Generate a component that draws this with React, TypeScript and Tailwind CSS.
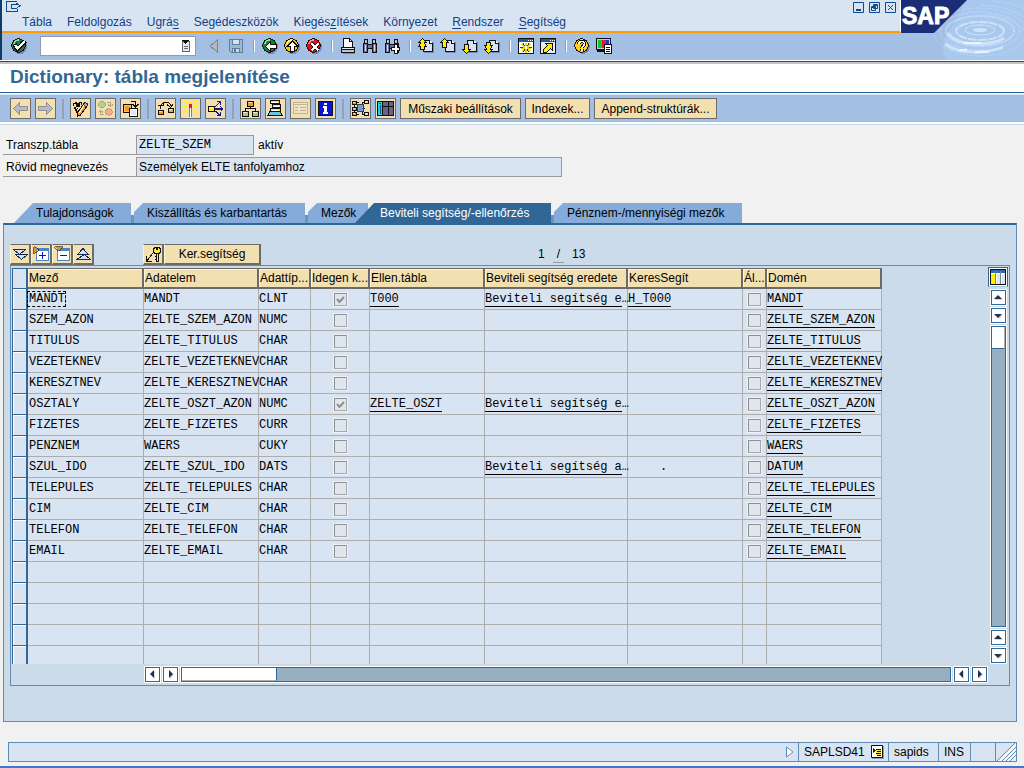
import type { ReactNode } from "react";
import clsx from "clsx";

const MENUS = [
    { before: "", key: "", after: "Tábla" },
    { before: "", key: "", after: "Feldolgozás" },
    { before: "Ugrá", key: "s", after: "" },
    { before: "Segédeszközök", key: "", after: "" },
    { before: "Kiegés", key: "z", after: "ítések" },
    { before: "Környezet", key: "", after: "" },
    { before: "", key: "R", after: "endszer" },
    { before: "", key: "S", after: "egítség" },
];

type Row = {
    field: string;
    element: string;
    type: string;
    foreign?: boolean;
    check?: string;
    origin?: string;
    help?: string;
    note?: string;
    domain: string;
};

const ROWS: Row[] = [
    { field: "MANDT", element: "MANDT", type: "CLNT", foreign: true, check: "T000", origin: "Beviteli segítség e", help: "H_T000", domain: "MANDT" },
    { field: "SZEM_AZON", element: "ZELTE_SZEM_AZON", type: "NUMC", domain: "ZELTE_SZEM_AZON" },
    { field: "TITULUS", element: "ZELTE_TITULUS", type: "CHAR", domain: "ZELTE_TITULUS" },
    { field: "VEZETEKNEV", element: "ZELTE_VEZETEKNEV", type: "CHAR", domain: "ZELTE_VEZETEKNEV" },
    { field: "KERESZTNEV", element: "ZELTE_KERESZTNEV", type: "CHAR", domain: "ZELTE_KERESZTNEV" },
    { field: "OSZTALY", element: "ZELTE_OSZT_AZON", type: "NUMC", foreign: true, check: "ZELTE_OSZT", origin: "Beviteli segítség e", domain: "ZELTE_OSZT_AZON" },
    { field: "FIZETES", element: "ZELTE_FIZETES", type: "CURR", domain: "ZELTE_FIZETES" },
    { field: "PENZNEM", element: "WAERS", type: "CUKY", domain: "WAERS" },
    { field: "SZUL_IDO", element: "ZELTE_SZUL_IDO", type: "DATS", origin: "Beviteli segítség a", note: ".", domain: "DATUM" },
    { field: "TELEPULES", element: "ZELTE_TELEPULES", type: "CHAR", domain: "ZELTE_TELEPULES" },
    { field: "CIM", element: "ZELTE_CIM", type: "CHAR", domain: "ZELTE_CIM" },
    { field: "TELEFON", element: "ZELTE_TELEFON", type: "CHAR", domain: "ZELTE_TELEFON" },
    { field: "EMAIL", element: "ZELTE_EMAIL", type: "CHAR", domain: "ZELTE_EMAIL" },
];

const HEADERS = ["Mező", "Adatelem", "Adattíp...", "Idegen k...", "Ellen.tábla", "Beviteli segítség eredete", "KeresSegít", "Ál...", "Domén"];

const MONO = "font-['Liberation_Mono',monospace]";

const Icon = ({ size = 16, children }: { size?: number; children: ReactNode }) => (
    <svg width={size} height={size} viewBox={`0 0 ${size} ${size}`} fill="none" shapeRendering="crispEdges" className="block shrink-0" aria-hidden="true">
        {children}
    </svg>
);

/* ---------- standard toolbar icons ---------- */

const Ball = ({ fill, shine, children }: { fill: string; shine: string; children: ReactNode }) => (
    <Icon>
        <circle cx="9" cy="9" r="7" fill="#7f86b8" />
        <circle cx="7.5" cy="7.5" r="6.8" fill={fill} stroke="#111" strokeWidth="1" />
        <path d="M3 6a5 5 0 0 1 5-4" stroke={shine} strokeWidth="1.5" />
        {children}
    </Icon>
);

const OkIcon = () => (
    <Ball fill="#17803a" shine="#9fe0a0">
        <path d="M3.5 6.500l3 4.500L14 3" stroke="#111" strokeWidth="4.5" />
        <path d="M4 7l2.700 3.500L13.500 3.500" stroke="#fff" strokeWidth="2.4" />
    </Ball>
);

const BackIcon = () => (
    <Ball fill="#17803a" shine="#9fe0a0">
        <path d="M3.500 8.500l5-5v3h6v4h-6v3z" fill="#fff" stroke="#111" strokeWidth="1" />
    </Ball>
);

const UpIcon = () => (
    <Ball fill="#ffc800" shine="#fff6b0">
        <path d="M8.500 3l5 5h-3v5.500h-4V8h-3z" fill="#fff" stroke="#111" strokeWidth="1" />
    </Ball>
);

const CancelIcon = () => (
    <Ball fill="#e0101c" shine="#ff9a9a">
        <path d="M5.500 5.500l7 7M12.500 5.500l-7 7" stroke="#111" strokeWidth="4" />
        <path d="M5.500 5.500l7 7M12.500 5.500l-7 7" stroke="#fff" strokeWidth="2" />
    </Ball>
);

const SaveIcon = () => (
    <Icon>
        <path d="M1.500 1.500h13v13h-11l-2-2z" fill="#9db9cf" stroke="#5f7f9c" />
        <path d="M4.500 1.500h7v5h-7z" fill="#d5e3ef" stroke="#5f7f9c" />
        <path d="M4.500 14v-4h7v4" fill="#c5d6e4" stroke="#5f7f9c" />
        <path d="M6 11h2v3H6z" fill="#5f7f9c" />
    </Icon>
);

const PrintIcon = () => (
    <Icon>
        <path d="M3 12h12v4H3z" fill="#7f86b8" />
        <path d="M3.500 9.500v-9h6l3 3v6" fill="#fff" stroke="#111" />
        <path d="M9.500.500v3h3" stroke="#111" />
        <path d="M1.500 9.500h13v2h-13z" fill="#e8e8f0" stroke="#111" />
        <path d="M1.500 11.500h13v2.500h-13z" fill="#bfc3d6" stroke="#111" />
    </Icon>
);

const Glasses = () => (
    <>
        <path d="M1.500 5.500h4v9h-4zM10.500 5.500h4v9h-4z" fill="#74749c" stroke="#111" />
        <path d="M2.500 1.500h3v4h-3zM10.500 1.500h3v4h-3z" fill="#b9bad2" stroke="#111" />
        <path d="M5.500 6.500h5v4h-5z" fill="#74749c" stroke="#111" />
        <path d="M3.500 7v6M12.500 7v6" stroke="#dcdcea" />
    </>
);

const FindIcon = () => <Icon><Glasses /></Icon>;

const FindNextIcon = () => (
    <Icon>
        <Glasses />
        <path d="M10.500 6.500h3v3h2v3h-2v3h-3v-3h-3v-3h3z" fill="#fff" stroke="#111" />
    </Icon>
);

const PageIcon = ({ arrow }: { arrow: string }) => (
    <Icon>
        <path d="M6 4h10v11H6z" fill="#7f86b8" />
        <path d="M5.500 2.500h6l3 3v8h-9z" fill="#d7e2f2" stroke="#111" />
        <path d="M11.500 2.500v3h3" fill="#fff" stroke="#111" />
        <path d={arrow} fill="#ffee00" stroke="#111" />
    </Icon>
);

const WindowStarIcon = () => (
    <Icon>
        <path d="M.5.500h15v15H.5z" fill="#fff" stroke="#111" />
        <path d="M1 1h14v3H1z" fill="#1464a0" />
        <path d="M12 2.500h1M14 2.500h1M10 2.500h1" stroke="#fff" />
        <path d="M8 5v10M3 9.500h10" stroke="#e8d800" strokeWidth="2" />
        <path d="M4 6l8 8M12 6l-8 8" stroke="#e8d800" strokeWidth="1.500" />
        <path d="M5 5l2 3M11 5l-2 3M5 14l2-3M11 14l-2-3M2 9h3M11 9h3" stroke="#111" strokeWidth=".8" />
        <path d="M7 8h2v3H7z" fill="#fff" />
    </Icon>
);

const ShortcutIcon = () => (
    <Icon>
        <path d="M.5.500h15v15H.5z" fill="#e8ecf2" stroke="#111" />
        <path d="M1 1h14v3H1z" fill="#1464a0" />
        <path d="M10 2.500h1M12 2.500h1M14 2.500h1" stroke="#fff" />
        <path d="M3.500 14.500v-3l4-4-2-2h7v7l-2-2-4 4z" fill="#ffee00" stroke="#111" />
    </Icon>
);

const HelpIcon = () => (
    <Icon>
        <circle cx="9" cy="9" r="6.800" fill="#7f86b8" />
        <circle cx="7.500" cy="7.500" r="6.800" fill="#ffd21e" stroke="#111" />
        <path d="M5 6c0-3.500 5.500-3.500 5.500 0C10.500 8 8 7.800 8 10M8 11.200v2" stroke="#111" strokeWidth="3.600" />
        <path d="M5 6c0-3.500 5.500-3.500 5.500 0C10.500 8 8 7.800 8 9.800M8 11.300v1.700" stroke="#fff" strokeWidth="1.600" />
    </Icon>
);

const LayoutIcon = () => (
    <Icon>
        <path d="M.5.500h14v11H.5z" fill="#c9ccd4" stroke="#111" />
        <path d="M2 2h4v8H2z" fill="#12c832" />
        <path d="M6 2h4v8H6z" fill="#f01428" />
        <path d="M10 2h3v8h-3z" fill="#1432f0" />
        <path d="M1 13h8" stroke="#111" strokeWidth="2" />
        <path d="M8.500 6.500h7v9h-7z" fill="#fff" stroke="#111" />
        <path d="M10 9.500h4M10 11.500h4M10 13.500h4" stroke="#111" />
    </Icon>
);

/* ---------- application toolbar icons ---------- */

const ArrowIcon = ({ d }: { d: string }) => (
    <Icon size={17}>
        <path d={d} fill="#b9b9c6" stroke="#938f94" />
    </Icon>
);

const Box = ({ x, y, w = 5, fill }: { x: number; y: number; w?: number; fill: string }) => (
    <>
        <rect x={x + 0.5} y={y + 0.5} width={w} height={w - 1} fill={fill} stroke="#111" />
        <path d={`M${x + 1} ${y + 1.5}h${w - 2}`} stroke="#fff" strokeOpacity=".7" />
    </>
);

const PencilIcon = () => (
    <Icon size={17}>
        <path d="M1.500 6V3.500h2V2h1v4h1V3h1v3h1V2h2v3" stroke="#111" />
        <path d="M3 7l4 7" stroke="#111" strokeWidth="3" />
        <path d="M4 7l3 6" stroke="#ffe63c" />
        <path d="M5.500 13L12.500 2.500l3.500 2.500-7.500 10-3 1z" fill="#f49b2c" stroke="#111" />
        <path d="M12.500 2.500l3.500 2.500-1.500 2-3.500-2.500z" fill="#9db4ee" stroke="#111" strokeWidth=".7" />
        <path d="M7 13l5-7.500" stroke="#fff" />
    </Icon>
);

const ActivateIcon = () => (
    <Icon size={17}>
        <circle cx="5" cy="4.500" r="3.200" fill="#b3d191" stroke="#8fb37a" />
        <circle cx="12" cy="12" r="3.200" fill="#efb08a" stroke="#d79873" />
        <path d="M10 2.500h3.500V6M11 4.500l2.500 2L16 4.500M7 14.500H3.500V11M1.500 12.500l2-2 2.500 2" stroke="#b1a588" />
    </Icon>
);

const CopyIcon = () => (
    <Icon size={17}>
        <path d="M1 4h9v9H1z" fill="#111" />
        <path d="M2.500 5.500h6v6h-6z" fill="#f79a1e" stroke="#ffc45c" />
        <path d="M7 8h9v9H7z" fill="#111" />
        <path d="M8.500 9.500h6v6h-6z" fill="#dce8f6" stroke="#fff" />
        <path d="M9 1.500h4.500V6M10.500 4l3 3 3-3" stroke="#111" />
    </Icon>
);

const WhereUsedIcon = () => (
    <Icon size={17}>
        <Box x={1} y={10} fill="#f79a1e" />
        <Box x={11} y={8} fill="#b3c56c" />
        <path d="M3.500 9V5.500l3-3h5l2 2V6M1 5.500h5V3M10 4.500l3.500 3 2.500-3" stroke="#111" />
    </Icon>
);

const WandIcon = () => (
    <Icon size={17}>
        <path d="M8.500 4V1M5 6.500H1M12 6.500h4M6 4L2 0M11 4l4-4M6 9l-4 4M11 9l4 4M4 2l2 2M13 2l-2 2" stroke="#fff000" />
        <path d="M7 7h3v10H7z" fill="#7d7da5" />
        <path d="M8.500 8v9" stroke="#fff" />
        <path d="M7 4h3v4H7z" fill="#f01428" />
    </Icon>
);

const SpreadIcon = () => (
    <Icon size={17}>
        <Box x={1} y={6} w={6} fill="#ffe63c" />
        <path d="M8 7l5-5M8 9h8M8 11l5 4M10 1.500h3.500V5M13.500 6.500L16 9l-2.500 2.500M10 15.500h3.500V12" stroke="#1a1a8c" strokeWidth="1.200" />
    </Icon>
);

const HierarchyIcon = () => (
    <Icon size={17}>
        <path d="M8.500 6v3M3.500 11V8.500h10V11" stroke="#111" />
        <Box x={5} y={1} w={6} fill="#f79a1e" />
        <Box x={0} y={11} w={6} fill="#b3c56c" />
        <Box x={10} y={11} w={6} fill="#b3c56c" />
    </Icon>
);

const StackIcon = () => (
    <Icon size={17}>
        <path d="M3.500.500h9v3h-9zM5.500 4.500h8v3h-8zM3.500 8.500h10v3h-10z" fill="#ffe63c" stroke="#111" />
        <path d="M5 2h6M7 6h5M5 10h6" stroke="#fff" />
        <path d="M3 11.500L.500 15.500h15L13 11.500" fill="#6cc4e0" stroke="#111" />
    </Icon>
);

const ListIcon = () => (
    <Icon size={17}>
        <path d="M1.500 2.500h14v11h-14z" fill="#eee3c5" stroke="#c1b595" />
        <path d="M2 4.500h13M3 7.500h3M8 7.500h6M3 10.500h3M8 10.500h6" stroke="#c1b595" />
    </Icon>
);

const InfoIcon = () => (
    <Icon size={17}>
        <path d="M1.500 1.500h14v14h-14z" fill="#0a14d2" stroke="#111" />
        <path d="M7 3h3v2H7zM6 6h4v6h1v2H6v-2h1V8H6z" fill="#fff" />
    </Icon>
);

const LinkedIcon = () => (
    <Icon size={17}>
        <path d="M2.500 4v10M4 8.500h9M4 2.500h3M4 14.500h3M10 4.500V2.500h3M10 12v2.500h3" stroke="#111" />
        <rect x="5.500" y="4.500" width="6" height="7" fill="#7b9cd0" stroke="#345" />
        <Box x={0} y={1} w={4} fill="#f79a1e" />
        <Box x={0} y={7} w={4} fill="#f79a1e" />
        <Box x={0} y={12} w={4} fill="#f79a1e" />
        <Box x={12} y={0} w={4} fill="#d7deb8" />
        <Box x={12} y={12} w={4} fill="#d7deb8" />
    </Icon>
);

const GridIcon = () => (
    <Icon size={17}>
        <path d="M.500 1.500h16v14H.500z" fill="#66638c" stroke="#111" />
        <path d="M1 2h4v13H1z" fill="#19d2ee" />
        <path d="M5.500 2v13M11.500 2v13M5 6.500h11" stroke="#111" />
        <path d="M2 3.500h2M3.500 5v9" stroke="#0a5a96" />
    </Icon>
);

/* ---------- table toolbar icons ---------- */

const DoubleDownIcon = () => (
    <Icon size={17}>
        <path d="M3.500 8.500h12l-6 5z" fill="#cfe0f4" stroke="#1c2a4a" />
        <path d="M1.500 3.500h12l-6 5z" fill="#cfe0f4" stroke="#1c2a4a" />
    </Icon>
);

const DoubleUpIcon = () => (
    <Icon size={17}>
        <path d="M2.500 8.500h11l-5.500-6z" fill="#cfe0f4" stroke="#1c2a4a" />
        <path d="M1.500 13.500h14l-6-5z" fill="#cfe0f4" stroke="#1c2a4a" />
    </Icon>
);

const FolderIcon = ({ plus }: { plus?: boolean }) => (
    <Icon size={17}>
        <path d="M3.500 2.500h12v12h-12z" fill="#fff" stroke="#4c86c4" />
        <path d="M4 4h11" stroke="#4c86c4" strokeWidth="2" />
        <path d={plus ? "M6 9.500h7M9.500 6v7" : "M6 9.500h7"} stroke="#0a14b4" />
        <path d={plus ? "M.500.500v7l5-3.500z" : "M.500.500h8l-4 4z"} fill="#f78a14" stroke="#111" strokeWidth=".6" />
    </Icon>
);

const KeyIcon = () => (
    <Icon size={17}>
        <circle cx="12" cy="4.500" r="3.500" fill="#ffe63c" stroke="#111" />
        <path d="M11 2h2v2h-2z" fill="#111" />
        <path d="M11.500 8v7.500h2V8M9.500 10.500h2M9.500 13.500h2" fill="#ffe63c" stroke="#111" />
        <path d="M8 7l-6 8M1.500 10v5.500H7" stroke="#111" />
    </Icon>
);

const ColumnsIcon = () => (
    <Icon>
        <path d="M.5.500h15v15H.5z" fill="#fff" stroke="#111" />
        <path d="M1 1h14v3H1z" fill="#2a6ab4" />
        <path d="M1 5h4v10H1z" fill="#ffee00" />
        <path d="M7 5h3v10H7zM12 5h3v10h-3z" fill="#dce4ee" />
        <path d="M5.500 2v13M10.500 2v13" stroke="#78849a" />
    </Icon>
);

/* ---------- parts ---------- */

const Brand = () => (
    <svg width="123" height="60" viewBox="0 0 123 60" className="block shrink-0 bg-[#a3bfe3]" role="img" aria-label="SAP">
        <path d="M66 0h57v60H45q-8-14 4-30z" fill="#a9c8ee" />
        <g fill="none" stroke="#cfe3f8">
            <ellipse cx="79" cy="30" rx="6" ry="1" strokeWidth="2" />
            <ellipse cx="79" cy="30" rx="15" ry="5" strokeWidth="1" />
            <ellipse cx="79" cy="31" rx="24" ry="9" strokeWidth="2" strokeDasharray="9 1" />
            <ellipse cx="79" cy="31" rx="34" ry="15" strokeDasharray="1 1" strokeWidth="2" />
            <ellipse cx="79" cy="31" rx="40" ry="19" strokeDasharray="1 1" />
            <ellipse cx="79" cy="32" rx="46" ry="24" strokeDasharray="1 2" />
            <path d="M47 33q6 10 28 11 20 0 28-6" strokeWidth="3" />
            <path d="M44 44q12 9 34 8 16-1 24-5" strokeWidth="3" />
            <path d="M62 43h18M58 50h8M74 52h14" stroke="#e9f4ff" strokeWidth="2" />
            <path d="M86 14q24 3 37 16M80 5q28 1 43 13M92 1q20 2 31 8" strokeDasharray="1 1" />
        </g>
        <path d="M0 0h66L33 33H0z" fill="#1c2d78" />
        <text x="1" y="24" fill="#fff" stroke="#fff" strokeWidth="1" fontFamily="Liberation Sans, sans-serif" fontWeight="700" fontSize="23">
            SAP
        </text>
    </svg>
);

const IconButton = ({ label, children }: { label: string; children: ReactNode }) => (
    <button type="button" aria-label={label} className="shrink-0">
        {children}
    </button>
);

const Sep = () => <span className="mr-[7px] ml-[9px] h-3 w-[2px] shrink-0 border-r border-white bg-[#9a9aa4]" />;

const ToolButton = ({ label, children }: { label: string; children: ReactNode }) => (
    <button
        type="button"
        aria-label={label}
        className="flex size-[21px] shrink-0 items-center justify-center border border-[#6b6b6b] bg-[#f3e0b0]"
    >
        {children}
    </button>
);

const TextButton = ({ className, children }: { className: string; children: ReactNode }) => (
    <button type="button" className={clsx("h-[21px] shrink-0 border border-[#6b6b6b] bg-[#f3e0b0] whitespace-nowrap", className)}>
        {children}
    </button>
);

const ToolSep = () => <span className="mx-[2px] h-5 w-[2px] shrink-0 bg-[#98a0b0]" />;

const TableButton = ({ label, children }: { label: string; children: ReactNode }) => (
    <button
        type="button"
        aria-label={label}
        className="flex size-[21px] shrink-0 items-center justify-center border-t border-r-2 border-b-2 border-l border-[#6b6b6b] border-l-[#fdf3d2] bg-[#f3e0b0]"
    >
        {children}
    </button>
);

const Tab = ({ className, active, children }: { className: string; active?: boolean; children: ReactNode }) => (
    <button
        type="button"
        role="tab"
        aria-selected={!!active}
        className={clsx("h-5 shrink-0 text-left whitespace-nowrap", active ? "bg-[#306796] text-white" : "bg-[#84abd9]", className)}
    >
        {children}
    </button>
);

const TabGap = () => <span className="h-2 w-[3px] shrink-0 bg-[#6b93bd]" />;

const ScrollButton = ({ label, d }: { label: string; d: string }) => (
    <button
        type="button"
        aria-label={label}
        className="flex size-[15px] shrink-0 items-center justify-center border border-[#306796] bg-white outline outline-white"
    >
        <svg width="9" height="9" viewBox="0 0 9 9" aria-hidden="true">
            <path d={d} transform="translate(1 1)" fill="#cdd8e8" />
            <path d={d} fill="#26304e" />
        </svg>
    </button>
);

const UP = "M0 6h8L4 2z";
const DOWN = "M0 3h8L4 7z";
const LEFT = "M6 0v8L2 4z";
const RIGHT = "M3 0v8l4-4z";

const Check = ({ checked, label }: { checked?: boolean; label: string }) => (
    <span className="relative mx-auto block size-[13px]">
        <input
            type="checkbox"
            disabled
            checked={!!checked}
            readOnly
            aria-label={label}
            className="block size-[13px] appearance-none border border-t-[#8f8f8f] border-r-[#a8a8a8] border-b-[#a8a8a8] border-l-[#8f8f8f] bg-[#dfe6ee] outline outline-[#eef2f6]"
        />
        {checked && (
            <svg width="13" height="13" viewBox="0 0 13 13" className="absolute inset-0" aria-hidden="true">
                <path d="M3 6l2.500 3L10 4" fill="none" stroke="#8f8f8f" strokeWidth="2" />
            </svg>
        )}
    </span>
);

const Cell = ({ children }: { children?: ReactNode }) => (
    <td className="border-r border-b border-[#adadad] bg-[#d9e4f2] p-0 whitespace-nowrap">{children}</td>
);

const CellLink = ({ children }: { children: ReactNode }) => (
    <a href="#" className="inline-block h-4 border-b border-black leading-4">
        {children}
    </a>
);

const FieldTable = () => (
    <table className={clsx("w-[870px] table-fixed border-separate border-spacing-0 text-xs", MONO)}>
        <colgroup>
            <col className="w-[16px]" />
            <col className="w-[116px]" />
            <col className="w-[115px]" />
            <col className="w-[52px]" />
            <col className="w-[59px]" />
            <col className="w-[115px]" />
            <col className="w-[143px]" />
            <col className="w-[115px]" />
            <col className="w-[24px]" />
            <col className="w-[115px]" />
        </colgroup>
        <thead>
            <tr className="h-[21px] font-['Liberation_Sans',Arial,sans-serif] text-[12px]">
                <td className="border border-r-2 border-[#306796] bg-[#d9e4f2] p-0" />
                {HEADERS.map((name) => (
                    <th
                        key={name}
                        scope="col"
                        className="border-t border-r-2 border-b-2 border-[#6b6b6b] bg-[#f3e0b0] p-0 pl-px text-left leading-4 font-normal whitespace-nowrap shadow-[inset_1px_1px_0_#fdf6da]"
                    >
                        {name}
                    </th>
                ))}
            </tr>
        </thead>
        <tbody>
            {ROWS.map((row, i) => (
                <tr key={row.field} className="h-[21px]">
                    <td className="border-r-2 border-b border-l border-[#306796] bg-[#d9e4f2] p-0 shadow-[inset_1px_1px_0_white]" />
                    <Cell>
                        <span className={clsx("pl-px", i === 0 && "outline outline-dashed outline-black")}>{row.field}</span>
                    </Cell>
                    <Cell>{row.element}</Cell>
                    <Cell>{row.type}</Cell>
                    <Cell><Check checked={row.foreign} label={`Idegen kulcs ${row.field}`} /></Cell>
                    <Cell>{row.check && <CellLink>{row.check}</CellLink>}</Cell>
                    <Cell>{row.origin && <><CellLink>{row.origin}</CellLink>…</>}</Cell>
                    <Cell>
                        {row.help && <CellLink>{row.help}</CellLink>}
                        {row.note && <span className="pl-8">{row.note}</span>}
                    </Cell>
                    <Cell><Check label={`Általános ${row.field}`} /></Cell>
                    <Cell><CellLink>{row.domain}</CellLink></Cell>
                </tr>
            ))}
            {[0, 1, 2, 3, 4].map((n) => (
                <tr key={n} className={n === 4 ? "h-[18px]" : "h-[21px]"}>
                    <td className={clsx("border-r-2 border-l border-[#306796] bg-[#d9e4f2] p-0 shadow-[inset_1px_1px_0_white]", n < 4 && "border-b")} />
                    {HEADERS.map((name) => (
                        <td key={name} className={clsx("border-r border-[#adadad] bg-[#d9e4f2] p-0", n < 4 && "border-b")} />
                    ))}
                </tr>
            ))}
        </tbody>
    </table>
);

const App = () => {
    return (
        <div className="flex min-h-screen flex-col border-b-2 border-[#3c78d2] bg-[#f1f1f1] font-['Liberation_Sans',Arial,sans-serif] text-[12px] leading-4 text-black">
            <header className="flex border-b border-white bg-[#a3bfe3]">
                <span className="w-[2px] shrink-0 bg-[#0f3c64]" />
                <div className="min-w-0 flex-1">
                    <div className="flex h-[33px] justify-between border-r border-b-2 border-r-white border-b-[#ff9c00] bg-[#d9e4f2]">
                        <div>
                            <button type="button" aria-label="Rendszermenü" className="ml-1 block h-[14px]">
                                <svg width="15" height="14" viewBox="0 0 15 14" fill="none" stroke="#0f4a8c" shapeRendering="crispEdges" aria-hidden="true">
                                    <path d="M11 1.500H.500v10H11V9M4.500 4.500h6v-1l3.500 2-3.500 3H5v-4" />
                                </svg>
                            </button>
                            <nav className="flex gap-[15px] pl-[20px] text-[#0f3f86]">
                                {MENUS.map((m) => (
                                    <button key={m.before + m.key + m.after} type="button" className="whitespace-nowrap">
                                        {m.before}
                                        <span className="underline underline-offset-2">{m.key}</span>
                                        {m.after}
                                    </button>
                                ))}
                            </nav>
                        </div>
                        <div className="flex gap-[5px] pt-[2px] pr-1">
                            {[
                                { label: "Kis méret", d: "M3 8h5", w: 2 },
                                { label: "Előző méret", d: "M4.500 2.500h4v4h-4zM2.500 4.500h4v4h-4zM4 3.500h5M2 5.500h5", w: 1 },
                                { label: "Bezárás", d: "M3 3l5 5M8 3l-5 5", w: 1 },
                            ].map((b) => (
                                <button key={b.label} type="button" aria-label={b.label} className="h-[11px]">
                                    <svg width="11" height="11" viewBox="0 0 11 11" fill="none" stroke="#0f4a8c" aria-hidden="true">
                                        <path d="M.500.500h10v10H.500z" />
                                        <path d={b.d} strokeWidth={b.w} />
                                    </svg>
                                </button>
                            ))}
                        </div>
                    </div>
                    <div className="flex h-[27px] items-center pb-px pl-[9px]">
                        <IconButton label="Bevitel"><OkIcon /></IconButton>
                        <div className="ml-[13px] flex h-5 w-[156px] shrink-0 items-center border border-[#8d9cae] bg-white pr-1">
                            <input aria-label="Parancs" className="min-w-0 flex-1 px-1 outline-none" />
                            <IconButton label="Előzmények">
                                <svg width="10" height="12" viewBox="0 0 10 12" shapeRendering="crispEdges" aria-hidden="true">
                                    <path d="M1.500 1.500h7v10h-7z" fill="#e4e8ee" stroke="#667" />
                                    <path d="M3 6.500h4M3 8.500h4" stroke="#667" />
                                    <path d="M0 0h8L4 4z" fill="#111" />
                                </svg>
                            </IconButton>
                        </div>
                        <div className="ml-[10px] flex gap-[6px]">
                            <IconButton label="Vissza lépés">
                                <Icon><path d="M11.500 2v12L4 8z" fill="#b4b8c2" stroke="#7d828c" /></Icon>
                            </IconButton>
                            <IconButton label="Mentés"><SaveIcon /></IconButton>
                        </div>
                        <Sep />
                        <div className="flex gap-[6px]">
                            <IconButton label="Vissza"><BackIcon /></IconButton>
                            <IconButton label="Befejezés"><UpIcon /></IconButton>
                            <IconButton label="Mégse"><CancelIcon /></IconButton>
                        </div>
                        <Sep />
                        <div className="flex gap-[6px]">
                            <IconButton label="Nyomtatás"><PrintIcon /></IconButton>
                            <IconButton label="Keresés"><FindIcon /></IconButton>
                            <IconButton label="Tovább keresés"><FindNextIcon /></IconButton>
                        </div>
                        <Sep />
                        <div className="flex gap-[6px]">
                            <IconButton label="Első oldal"><PageIcon arrow="M4.500.500l4 4h-2v1l2 3h-2v3h-4v-3h-2l2-3v-1h-2z" /></IconButton>
                            <IconButton label="Előző oldal"><PageIcon arrow="M4.500.500l4 4h-2v5h-4v-5h-2z" /></IconButton>
                            <IconButton label="Következő oldal"><PageIcon arrow="M4.500 15.500l4-4h-2v-5h-4v5h-2z" /></IconButton>
                            <IconButton label="Utolsó oldal"><PageIcon arrow="M4.500 15.500l4-4h-2v-1l2-3h-2v-3h-4v3h-2l2 3v1h-2z" /></IconButton>
                        </div>
                        <Sep />
                        <div className="flex gap-[6px]">
                            <IconButton label="Új mód"><WindowStarIcon /></IconButton>
                            <IconButton label="Parancsikon"><ShortcutIcon /></IconButton>
                        </div>
                        <Sep />
                        <div className="flex gap-[6px]">
                            <IconButton label="Súgó"><HelpIcon /></IconButton>
                            <IconButton label="Elrendezés"><LayoutIcon /></IconButton>
                        </div>
                    </div>
                </div>
                <Brand />
            </header>

            <div className="border-t border-b border-t-[#44444c] border-b-[#1f5a94] bg-white">
                <h1 className="h-[30px] border-t-2 border-[#c4c4c8] pl-[10px] text-[19px] leading-[26px] font-bold text-[#306796]">
                    Dictionary: tábla megjelenítése
                </h1>
            </div>

            <div className="border-t border-b border-t-white border-b-[#c5d8ea]">
                <div className="flex h-[30px] items-center gap-1 border-t border-b-2 border-t-[#d9e4f2] border-b-white bg-[#a3bfe3] pl-[10px]">
                    <ToolButton label="Előző objektum"><ArrowIcon d="M1.500 8.500l6-6v4h8v4h-8v4z" /></ToolButton>
                    <ToolButton label="Következő objektum"><ArrowIcon d="M15.500 8.500l-6-6v4h-8v4h8v4z" /></ToolButton>
                    <ToolSep />
                    <ToolButton label="Megjelenítés/módosítás"><PencilIcon /></ToolButton>
                    <ToolButton label="Aktív/inaktív"><ActivateIcon /></ToolButton>
                    <ToolButton label="Másik objektum"><CopyIcon /></ToolButton>
                    <ToolSep />
                    <ToolButton label="Ellenőrzés"><WhereUsedIcon /></ToolButton>
                    <ToolButton label="Aktiválás"><WandIcon /></ToolButton>
                    <ToolButton label="Hol használt"><SpreadIcon /></ToolButton>
                    <ToolSep />
                    <ToolButton label="Objektumlista"><HierarchyIcon /></ToolButton>
                    <ToolButton label="Navigációs ablak"><StackIcon /></ToolButton>
                    <ToolButton label="Teljes kép"><ListIcon /></ToolButton>
                    <ToolButton label="Információ"><InfoIcon /></ToolButton>
                    <ToolSep />
                    <ToolButton label="Grafika"><LinkedIcon /></ToolButton>
                    <ToolButton label="Tartalom"><GridIcon /></ToolButton>
                    <TextButton className="w-[121px]">Műszaki beállítások</TextButton>
                    <TextButton className="w-[65px]">Indexek...</TextButton>
                    <TextButton className="w-[123px]">Append-struktúrák...</TextButton>
                </div>
            </div>

            <main className="flex flex-1 flex-col pr-[7px] pl-[3px]">
                <div className="mt-[10px] flex h-5">
                    <label htmlFor="table-name" className="w-[133px] border-b border-[#9a9a9a] pl-[3px] leading-5">Transzp.tábla</label>
                    <input id="table-name" readOnly value="ZELTE_SZEM" className={clsx("w-[118px] border border-[#9a9a9a] bg-[#d9e4f2] px-[2px] text-xs outline-none", MONO)} />
                    <span className="pl-1 leading-5">aktív</span>
                </div>
                <div className="mt-[2px] flex h-5">
                    <label htmlFor="short-text" className="w-[133px] border-b border-[#9a9a9a] pl-[3px] leading-5">Rövid megnevezés</label>
                    <input id="short-text" readOnly value="Személyek ELTE tanfolyamhoz" className="w-[426px] border border-[#9a9a9a] bg-[#d9e4f2] px-[2px] outline-none" />
                </div>

                <div role="tablist" className="mt-[26px] flex items-end pl-[11px]">
                    <Tab className="w-[117px] pl-[22px] [clip-path:polygon(19px_0,100%_0,100%_100%,0_100%)]">Tulajdonságok</Tab>
                    <TabGap />
                    <Tab className="w-[171px] pl-[13px] [clip-path:polygon(9px_0,100%_0,100%_100%,0_100%,0_9px)]">Kiszállítás és karbantartás</Tab>
                    <TabGap />
                    <Tab className="w-[60px] pl-[13px] [clip-path:polygon(9px_0,100%_0,100%_100%,0_100%,0_9px)]">Mezők</Tab>
                    <Tab active className="-ml-[13px] w-[196px] pl-[25px] [clip-path:polygon(19px_0,100%_0,100%_100%,0_100%)]">Beviteli segítség/-ellenőrzés</Tab>
                    <TabGap />
                    <Tab className="w-[188px] pl-[13px] [clip-path:polygon(9px_0,100%_0,100%_100%,0_100%,0_9px)]">Pénznem-/mennyiségi mezők</Tab>
                </div>

                <section className="border border-t-2 border-[#5f8bb5] border-t-[#306796] bg-[#ccdbea] px-[6px] pt-[19px] pb-[35px]">
                    <div className="flex h-[21px] items-center">
                        <TableButton label="Összes kibontása"><DoubleDownIcon /></TableButton>
                        <TableButton label="Kibontás"><FolderIcon plus /></TableButton>
                        <TableButton label="Összecsukás"><FolderIcon /></TableButton>
                        <TableButton label="Összes összecsukása"><DoubleUpIcon /></TableButton>
                        <span className="w-[49px] shrink-0" />
                        <TableButton label="Kulcs"><KeyIcon /></TableButton>
                        <button type="button" className="h-[21px] w-[97px] shrink-0 border-t border-r-2 border-b-2 border-l border-[#6b6b6b] border-l-[#fdf3d2] bg-[#f3e0b0] leading-4">
                            Ker.segítség
                        </button>
                        <div className="ml-[277px] flex gap-2">
                            <span>1</span>
                            <span className="border-b border-[#9a9a9a] px-1">/</span>
                            <span>13</span>
                        </div>
                    </div>

                    <div className="flex border border-[#5f8bb5] pt-[2px] pl-px">
                        <div className="min-w-0 flex-1">
                            <FieldTable />
                            <div className="mt-[3px] mb-[3px] ml-[133px] flex h-[15px] gap-[3px]">
                                <ScrollButton label="Balra" d={LEFT} />
                                <ScrollButton label="Jobbra" d={RIGHT} />
                                <div className="flex flex-1 border border-[#306796] bg-[#96b0c2] outline outline-white">
                                    <div className="w-[95px] border-r border-b border-r-[#306796] border-b-[#b0b0b0] bg-white" />
                                </div>
                                <ScrollButton label="Balra lap" d={LEFT} />
                                <ScrollButton label="Jobbra lap" d={RIGHT} />
                            </div>
                        </div>
                        <div className="flex w-[22px] shrink-0 flex-col items-center gap-[3px] pb-[22px]">
                            <button type="button" aria-label="Beállítások" className="-mt-px border border-[#306796] border-b-[#a9c8dc] bg-white p-px">
                                <ColumnsIcon />
                            </button>
                            <ScrollButton label="Fel" d={UP} />
                            <ScrollButton label="Le" d={DOWN} />
                            <div className="w-[15px] flex-1 border border-[#306796] bg-[#96b0c2] outline outline-white">
                                <div className="h-[22px] border-r border-b border-r-[#b0b0b0] border-b-[#306796] bg-white" />
                            </div>
                            <ScrollButton label="Lap fel" d={UP} />
                            <ScrollButton label="Lap le" d={DOWN} />
                        </div>
                    </div>
                </section>
            </main>

            <footer className="mt-5 mr-[7px] mb-1 ml-2 flex h-5 border border-[#5f8bb5] bg-[#d9e4f2] leading-[18px]">
                <div className="flex flex-1 items-center justify-end pr-1">
                    <svg width="8" height="12" viewBox="0 0 8 12" aria-hidden="true">
                        <path d="M.500 1v10L7 6z" fill="#fff" stroke="#5f8bb5" />
                    </svg>
                </div>
                <div className="flex w-[90px] items-center justify-between border-l border-[#5f8bb5] pr-1 pl-[5px]">
                    SAPLSD41
                    <svg width="13" height="14" viewBox="0 0 13 14" aria-hidden="true">
                        <path d="M1 1h12v13H1z" fill="#8f9ab8" />
                        <path d="M.500.500h11v12H.500z" fill="#fff" stroke="#111" />
                        <path d="M5 4h5v6H5z" fill="#ffe63c" />
                        <path d="M5 4.500h5M6 6.500h4M5 8.500h5M6 10.500h4" stroke="#111" />
                        <path d="M2 3v5l3-2.500z" fill="#111" />
                    </svg>
                </div>
                <div className="w-[50px] border-l border-[#5f8bb5] pl-[5px]">sapids</div>
                <div className="w-[32px] border-l border-[#5f8bb5] pl-[5px]">INS</div>
                <div className="w-[25px] border-l border-[#5f8bb5]" />
                <div className="w-[21px] border-l border-[#5f8bb5]">
                    <svg width="20" height="18" viewBox="0 0 20 18" className="block" aria-hidden="true">
                        <path d="M1 18L19 0h1v18z" fill="#f1f1f1" />
                        <path d="M1 18L19 0M6 18L20 4M10 18L20 8M14 18l6-6" stroke="#5f8bb5" />
                        <path d="M4 18L20 2M8 18L20 6M12 18l8-8" stroke="#fff" />
                    </svg>
                </div>
            </footer>
        </div>
    );
};

export default App;
